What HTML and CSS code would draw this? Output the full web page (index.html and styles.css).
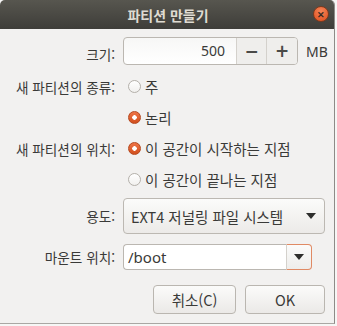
FILE: index.html
```
<!DOCTYPE html>
<html lang="ko">
<head>
  <meta charset="UTF-8">
  <title>파티션 만들기</title>
  <link rel="stylesheet" href="styles.css">
</head>
<body>

<div class="dialog">
  <div class="titlebar">
    <span class="title">파티션 만들기</span>
    <span class="btn-close">&#x2715;</span>
  </div>

  <div class="form">
    <label class="lbl row-size">크기:</label>
    <div class="size-ctrl">
      <div class="spin">
        <span class="spin-value">500</span>
        <span class="spin-btn">&minus;</span>
        <span class="spin-btn">+</span>
      </div>
      <span class="unit">MB</span>
    </div>

    <label class="lbl">새 파티션의 종류:</label>
    <div class="radio"><span class="dot"></span>주</div>
    <span></span>
    <div class="radio"><span class="dot checked"></span>논리</div>

    <label class="lbl">새 파티션의 위치:</label>
    <div class="radio"><span class="dot checked"></span>이 공간이 시작하는 지점</div>
    <span></span>
    <div class="radio"><span class="dot"></span>이 공간이 끝나는 지점</div>

    <label class="lbl row-use">용도:</label>
    <div class="combo row-use">
      <span>EXT4 저널링 파일 시스템</span>
      <span class="arrow"></span>
    </div>

    <label class="lbl row-mount">마운트 위치:</label>
    <div class="mount row-mount">
      <span class="mount-text">/boot</span>
      <span class="mount-btn"><span class="arrow"></span></span>
    </div>
  </div>

  <div class="actions">
    <button class="btn btn-cancel">취소(C)</button>
    <button class="btn btn-ok">OK</button>
  </div>
</div>

</body>
</html>
```

FILE: styles.css
```
body {
  margin: 0;
  background: #f6f6f5;
  font-family: "Noto Sans CJK KR", "Noto Sans", sans-serif;
  font-size: 13.6px;
  color: #3a3a38;
}

.dialog {
  width: 334px;
  height: 323px;
  background: #f2f1f0;
  border-right: 1px solid #8d8b87;
  border-bottom: 1px solid #a9a7a3;
  border-radius: 5px 5px 0 0;
  display: flex;
  flex-direction: column;
  overflow: hidden;
}

.titlebar {
  height: 29px;
  flex: none;
  background: linear-gradient(#57564f, #3e3d39);
  display: flex;
  align-items: center;
  justify-content: center;
  position: relative;
}

.title {
  color: #dfdbd2;
  font-weight: bold;
  font-size: 14px;
  margin-left: 2px;
}

.btn-close {
  position: absolute;
  right: 5px;
  top: 6px;
  width: 16px;
  height: 16px;
  border-radius: 50%;
  background: radial-gradient(circle at 50% 30%, #f58558, #df4d1c);
  border: 1px solid #7c3a1e;
  box-sizing: border-box;
  color: #3a2a22;
  font-size: 9px;
  font-weight: bold;
  display: flex;
  align-items: center;
  justify-content: center;
  line-height: 1;
}

.form {
  display: grid;
  grid-template-columns: 107px 1fr;
  column-gap: 8px;
  padding: 8px 0 0 8px;
}

.lbl {
  justify-self: end;
  align-self: center;
  white-space: nowrap;
}

.size-ctrl {
  display: flex;
  align-items: center;
  gap: 8px;
  margin-bottom: 6px;
}

.spin {
  width: 175px;
  height: 28px;
  box-sizing: border-box;
  border: 1px solid #bbb7b1;
  border-radius: 4px;
  background: linear-gradient(#f7f7f6, #ffffff);
  display: flex;
  overflow: hidden;
}

.spin-value {
  flex: 1;
  text-align: right;
  padding-right: 11px;
  line-height: 26px;
  font-family: "Noto Sans", sans-serif;
  font-size: 14px;
}

.spin-btn {
  width: 29px;
  border-left: 1px solid #d4d1cc;
  background: #efeeec;
  text-align: center;
  line-height: 26px;
  font-family: "DejaVu Sans", sans-serif;
  font-size: 17px;
  font-weight: bold;
  color: #4a4a48;
}

.spin-btn:last-child {
  width: 30px;
}

.unit {
  font-family: "Noto Sans", sans-serif;
  font-size: 14px;
}

.radio {
  height: 31px;
  display: flex;
  align-items: center;
  gap: 4px;
  padding-left: 5px;
  font-size: 14.5px;
}

.dot {
  width: 13px;
  height: 13px;
  box-sizing: border-box;
  border-radius: 50%;
  border: 1px solid #b4b0aa;
  background: linear-gradient(#ffffff, #f1f0ee);
}

.dot.checked {
  border-color: #b5481f;
  background: radial-gradient(circle, #ffffff 0 2px, transparent 2.5px), linear-gradient(#ee7446, #d24f1d);
}

.row-use {
  margin-top: 3px;
}

.combo {
  width: 202px;
  height: 36px;
  box-sizing: border-box;
  border: 1px solid #bcb8b2;
  border-radius: 4px;
  background: linear-gradient(#fbfbfa, #eceae8);
  display: flex;
  align-items: center;
  justify-content: space-between;
  padding: 0 8px 0 7px;
  font-size: 14.5px;
}

.arrow {
  width: 0;
  height: 0;
  border-left: 5px solid transparent;
  border-right: 5px solid transparent;
  border-top: 6px solid #2e2e2c;
}

.row-mount {
  margin-top: 10px;
}

.mount {
  width: 189px;
  height: 26px;
  display: flex;
}

.mount-text {
  flex: 1;
  box-sizing: border-box;
  border: 1px solid #bbb7b1;
  border-right: none;
  border-radius: 4px 0 0 4px;
  background: #ffffff;
  padding-left: 4px;
  line-height: 24px;
  font-family: "Noto Sans", sans-serif;
  font-size: 15px;
}

.mount-btn {
  width: 26px;
  box-sizing: border-box;
  border: 1px solid #e08a64;
  border-left: 1px solid #d4d1cc;
  border-radius: 0 4px 4px 0;
  background: linear-gradient(#fbfbfa, #eeedeb);
  display: flex;
  align-items: center;
  justify-content: center;
}

.actions {
  display: flex;
  justify-content: flex-end;
  gap: 9px;
  padding: 15px 9px 0 0;
}

.btn {
  height: 29px;
  border: 1px solid #bab6b0;
  border-radius: 4px;
  background: linear-gradient(#fbfbfa, #ebe9e7);
  font-family: "Noto Sans CJK KR", "Noto Sans", sans-serif;
  font-size: 14.5px;
  color: #3a3a38;
  padding: 0;
}

.btn-cancel {
  width: 83px;
}

.btn-ok {
  width: 80px;
}
```
